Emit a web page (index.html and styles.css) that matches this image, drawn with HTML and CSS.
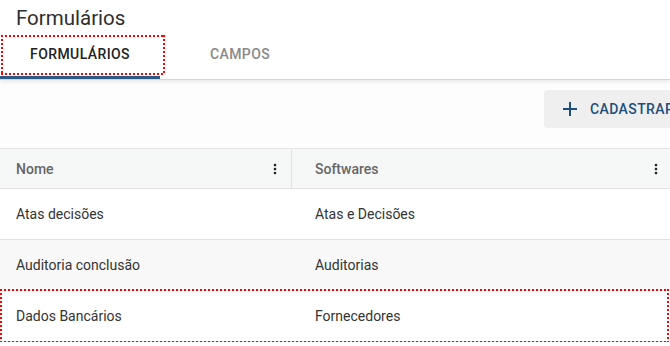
FILE: index.html
```html
<!DOCTYPE html>
<html lang="pt-BR">
<head>
  <meta charset="UTF-8" />
  <meta name="viewport" content="width=device-width, initial-scale=1.0"/>
  <title>Formulários</title>
  <link rel="stylesheet" href="styles.css">
</head>
<body>

  <!-- Cabeçalho com abas -->
  <header class="page-header">
    <h1 class="page-title">Formulários</h1>
    <nav class="tabs">
      <div class="tab tab-active marked">FORMULÁRIOS</div>
      <div class="tab">CAMPOS</div>
    </nav>
  </header>

  <main class="content">
    <div class="toolbar">
      <button class="btn-add">
        <svg class="icon-add" viewBox="0 0 24 24" width="24" height="24"><path d="M19 13h-6v6h-2v-6H5v-2h6V5h2v6h6v2z"/></svg>
        CADASTRAR
      </button>
    </div>

    <!-- Tabela -->
    <div class="grid">
      <div class="grid-row grid-head">
        <div class="cell head-cell first">
          <span>Nome</span>
          <svg class="kebab" viewBox="0 0 24 24" width="16" height="16"><path d="M12 8c1.1 0 2-.9 2-2s-.9-2-2-2-2 .9-2 2 .9 2 2 2zm0 2c-1.1 0-2 .9-2 2s.9 2 2 2 2-.9 2-2-.9-2-2-2zm0 6c-1.1 0-2 .9-2 2s.9 2 2 2 2-.9 2-2-.9-2-2-2z"/></svg>
        </div>
        <div class="cell head-cell second">
          <span>Softwares</span>
          <svg class="kebab" viewBox="0 0 24 24" width="16" height="16"><path d="M12 8c1.1 0 2-.9 2-2s-.9-2-2-2-2 .9-2 2 .9 2 2 2zm0 2c-1.1 0-2 .9-2 2s.9 2 2 2 2-.9 2-2-.9-2-2-2zm0 6c-1.1 0-2 .9-2 2s.9 2 2 2 2-.9 2-2-.9-2-2-2z"/></svg>
        </div>
      </div>
      <div class="grid-row">
        <div class="cell first">Atas decisões</div>
        <div class="cell">Atas e Decisões</div>
      </div>
      <div class="grid-row striped">
        <div class="cell first">Auditoria conclusão</div>
        <div class="cell">Auditorias</div>
      </div>
      <div class="grid-row marked-row">
        <div class="cell first">Dados Bancários</div>
        <div class="cell">Fornecedores</div>
      </div>
    </div>
  </main>

</body>
</html>
```

FILE: styles.css
```css
body {
  margin: 0;
  font-family: Roboto, 'Liberation Sans', sans-serif;
  background-color: #fdfdfd;
  color: #333;
  overflow: hidden;
}
.page-header {
  background: #fff;
  border-bottom: 1px solid #d6d6d6;
  box-shadow: 0 2px 4px rgba(0, 0, 0, 0.08);
}
.page-title {
  margin: 0;
  padding: 5px 16px 1px;
  font-size: 20.5px;
  line-height: 26px;
  font-weight: 400;
  color: #2e2e2e;
}
.tabs {
  display: flex;
  height: 47px;
}
.tab {
  width: 160px;
  display: flex;
  align-items: center;
  justify-content: center;
  padding-bottom: 3px;
  box-sizing: border-box;
  font-size: 14px;
  font-weight: 500;
  letter-spacing: 0.4px;
  color: #8a8a8a;
  position: relative;
}
.tab-active {
  color: #222;
  border-bottom: 3px solid #2b5a87;
  padding-bottom: 0;
}
/* marcação pontilhada vermelha */
.marked::after,
.marked-row::after {
  content: '';
  position: absolute;
  background:
    repeating-linear-gradient(90deg, #f00 0 2px, transparent 2px 4px) top left / 100% 2px no-repeat,
    repeating-linear-gradient(90deg, #f00 0 2px, transparent 2px 4px) bottom left / 100% 2px no-repeat,
    repeating-linear-gradient(180deg, #f00 0 2px, transparent 2px 4px) top left / 2px 100% no-repeat,
    repeating-linear-gradient(180deg, #f00 0 2px, transparent 2px 4px) top right / 2px 100% no-repeat;
}
.marked::after {
  left: 1px;
  top: 3px;
  width: 164px;
  height: 40px;
}
.toolbar {
  display: flex;
  justify-content: flex-end;
  margin-right: -16px;
  padding: 10px 0 20px;
}
.btn-add {
  display: flex;
  align-items: center;
  gap: 8px;
  height: 38px;
  width: 142px;
  padding: 0 14px;
  border: none;
  border-radius: 4px;
  background-color: #efefef;
  color: #1d4f7c;
  font-family: inherit;
  font-size: 14px;
  font-weight: 500;
  letter-spacing: 0.4px;
  white-space: nowrap;
}
.icon-add {
  fill: #1d4f7c;
  flex: none;
}
.grid {
  border-top: 1px solid #e4e4e4;
}
.grid-row {
  display: grid;
  grid-template-columns: 299px 1fr;
  height: 50px;
  border-bottom: 1px solid #e2e2e2;
  background: #fff;
  position: relative;
}
.grid-head {
  height: 39px;
  background: #f6f8f8;
}
.striped {
  background: #f8f8f8;
}
.cell {
  display: flex;
  align-items: center;
  padding: 0 16px;
  font-size: 14px;
  color: #333;
}
.head-cell {
  justify-content: space-between;
  font-weight: 500;
  color: #666;
}
.head-cell.first {
  width: 292px;
  box-sizing: border-box;
  padding-right: 8px;
  border-right: 1px solid #e2e2e2;
}
.head-cell.second {
  padding-right: 6px;
}
.kebab {
  fill: #222;
}
.marked-row::after {
  left: 0;
  top: -2px;
  right: 1px;
  bottom: -2px;
}
```
